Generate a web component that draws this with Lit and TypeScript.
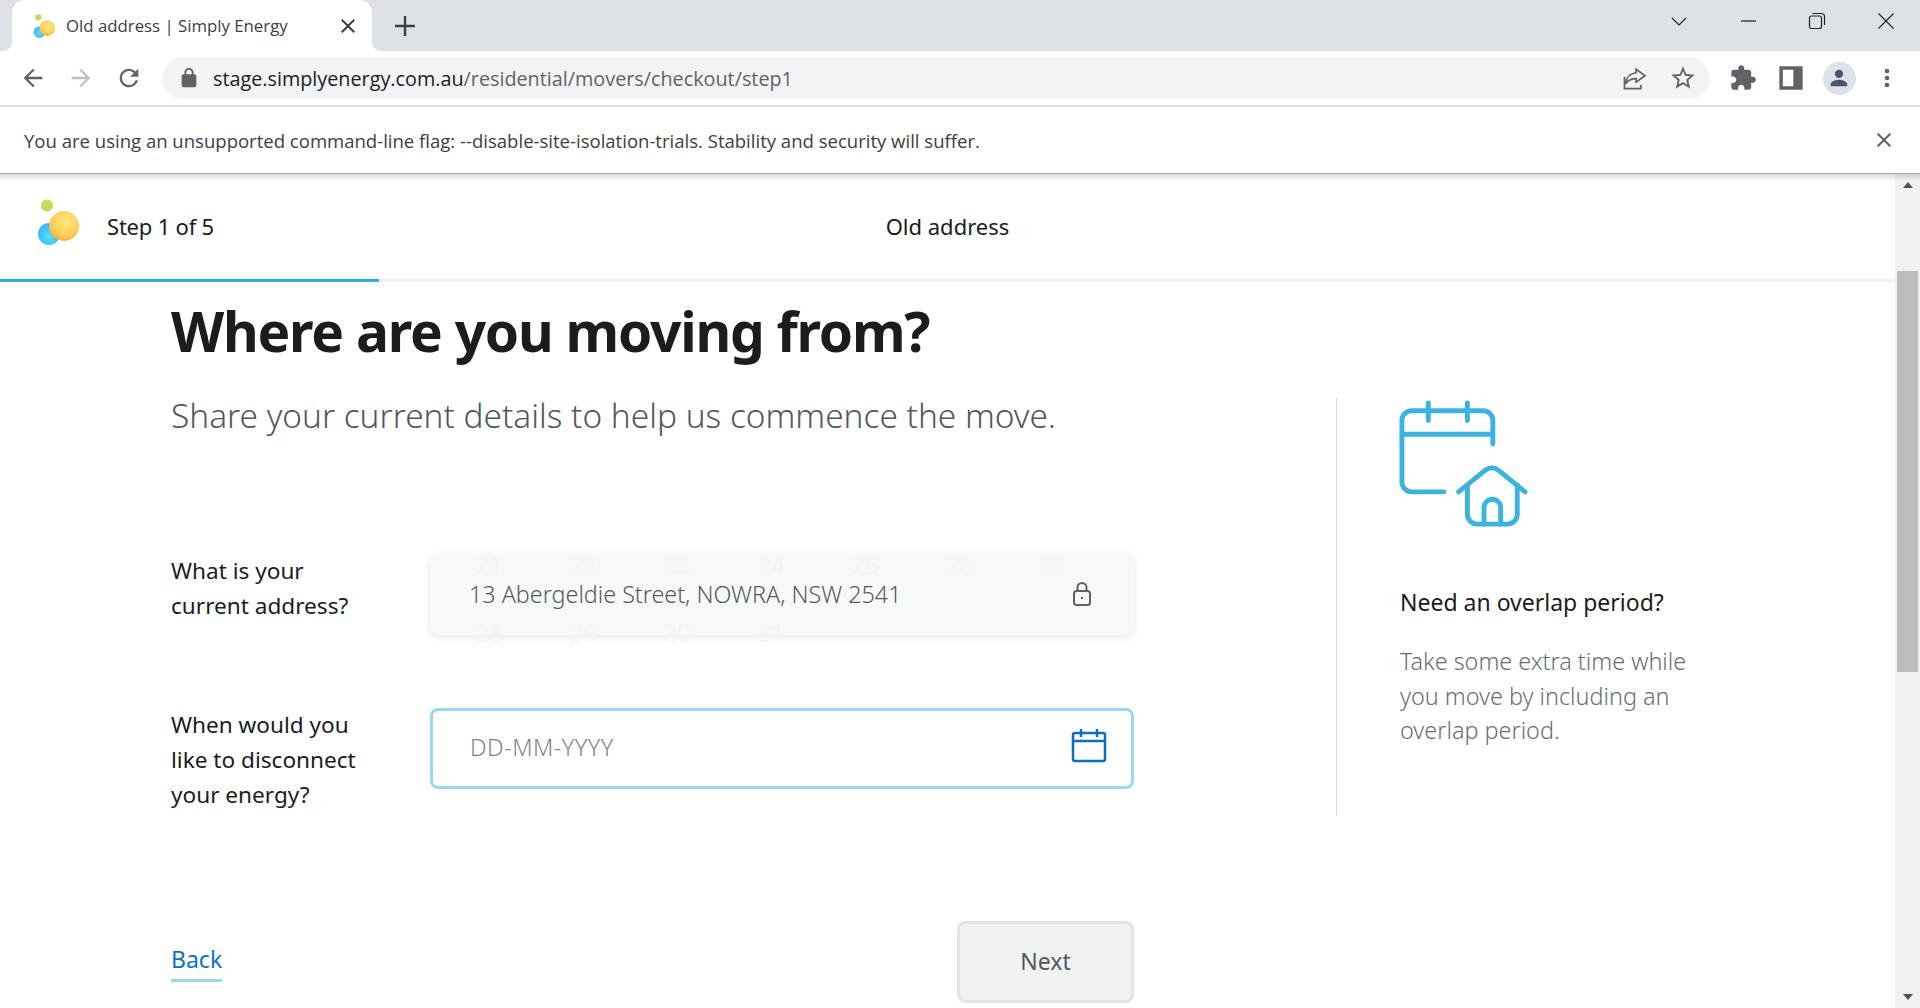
import {css, html, LitElement, svg} from "lit";
import {customElement} from "lit/decorators.js";

const icon = (d: string, cls = "") => html`<svg class=${cls} viewBox="0 0 24 24"><path d=${d}></path></svg>`;

const ARROW = "M20 11H7.83l5.59-5.59L12 4l-8 8 8 8 1.41-1.41L7.83 13H20v-2z";
const RELOAD = "M17.65 6.35A7.958 7.958 0 0 0 12 4c-4.42 0-7.99 3.58-7.99 8s3.57 8 7.99 8c3.73 0 6.84-2.55 7.73-6h-2.08A5.99 5.99 0 0 1 12 18c-3.31 0-6-2.69-6-6s2.69-6 6-6c1.66 0 3.14.69 4.22 1.78L13 11h7V4l-2.35 2.35z";
const STAR = "M22 9.24l-7.19-.62L12 2 9.19 8.63 2 9.24l5.46 4.73L5.82 21 12 17.27 18.18 21l-1.63-7.03L22 9.24zM12 15.4l-3.76 2.27 1-4.28-3.32-2.88 4.38-.38L12 6.1l1.71 4.04 4.38.38-3.32 2.88 1 4.28L12 15.4z";
const PUZZLE = "M20.5 11H19V7c0-1.1-.9-2-2-2h-4V3.5C13 2.12 11.88 1 10.5 1S8 2.12 8 3.5V5H4c-1.1 0-1.99.9-1.99 2v3.8H3.5c1.49 0 2.7 1.21 2.7 2.7s-1.21 2.7-2.7 2.7H2V20c0 1.1.9 2 2 2h3.8v-1.5c0-1.49 1.21-2.7 2.7-2.7 1.49 0 2.7 1.21 2.7 2.7V22H17c1.1 0 2-.9 2-2v-4h1.5c1.38 0 2.5-1.12 2.5-2.5S21.88 11 20.5 11z";
const LOCK = "M18 8h-1V6c0-2.76-2.24-5-5-5S7 3.24 7 6v2H6c-1.1 0-2 .9-2 2v10c0 1.1.9 2 2 2h12c1.1 0 2-.9 2-2V10c0-1.1-.9-2-2-2zM9 6c0-1.66 1.34-3 3-3s3 1.34 3 3v2H9V6z";
const CLOSE = "M19 6.41 17.59 5 12 10.59 6.41 5 5 6.41 10.59 12 5 17.59 6.41 19 12 13.41 17.59 19 19 17.59 13.41 12z";

const logo = (size: number) => html`
    <svg class="logo" width=${size} height=${size} viewBox="0 0 46 46">
        <defs>
            <radialGradient id="sun-${size}" cx="0.55" cy="0.35" r="0.7">
                <stop offset="0" stop-color="#ffe67a"></stop>
                <stop offset="0.65" stop-color="#fdd05c"></stop>
                <stop offset="1" stop-color="#f9a63a"></stop>
            </radialGradient>
            <radialGradient id="sea-${size}" cx="0.5" cy="0.6" r="0.7">
                <stop offset="0" stop-color="#5fdcff"></stop>
                <stop offset="1" stop-color="#2ab0f0"></stop>
            </radialGradient>
        </defs>
        <circle cx="12" cy="6.5" r="6" fill="#c3de55"></circle>
        <circle cx="14" cy="35" r="11" fill="url(#sea-${size})"></circle>
        <circle cx="29" cy="27" r="15" fill="url(#sun-${size})"></circle>
    </svg>`;

@customElement("browser-chrome")
class BrowserChrome extends LitElement {
    static styles = css`
        :host {
            display: block;
            font-family: "Open Sans", sans-serif;
            color: #3c4043;
        }

        path {
            fill: #5f6368;
        }

        .strip {
            display: flex;
            align-items: stretch;
            height: 51px;
            background: #dee1e6;
        }

        .tab {
            position: relative;
            display: flex;
            align-items: center;
            box-sizing: border-box;
            width: 360px;
            margin-left: 12px;
            padding: 0 12px 0 20px;
            background: #fff;
            border-radius: 13px 13px 0 0;
            font-size: 16.8px;
        }

        .tab svg {
            flex: none;
        }

        .tab-x {
            width: 24px;
            height: 24px;
        }

        .tab-x path {
            fill: #3c4043;
        }

        .tab::before,
        .tab::after {
            content: "";
            position: absolute;
            bottom: 0;
            width: 10px;
            height: 10px;
        }

        .tab::before {
            left: -10px;
            background: radial-gradient(circle at 0 0, transparent 10px, #fff 10.5px);
        }

        .tab::after {
            right: -10px;
            background: radial-gradient(circle at 100% 0, transparent 10px, #fff 10.5px);
        }

        .tab-title {
            flex: 1;
            margin-left: 10px;
            white-space: nowrap;
        }

        .plus {
            display: flex;
            align-items: center;
            margin-left: 21px;
        }

        .plus path {
            fill: #3c4043;
        }

        .spacer {
            flex: 1;
        }

        .win {
            display: flex;
            align-items: center;
            justify-content: center;
            width: 69px;
            margin-bottom: 9px;
        }

        .win svg {
            fill: none;
            stroke: #202124;
            stroke-width: 1.2;
        }

        .win path {
            fill: none;
        }

        .toolbar {
            display: flex;
            align-items: center;
            height: 54px;
            padding: 0 9px;
            background: #fff;
            border-bottom: 2px solid #dcdcdc;
        }

        .slot {
            display: flex;
            align-items: center;
            justify-content: center;
            flex: none;
            width: 48px;
        }

        .slot svg {
            width: 28px;
            height: 28px;
        }

        .flip {
            transform: scaleX(-1);
        }

        .flip path {
            fill: #bdc1c6;
        }

        .share path {
            fill: none;
            stroke: #5f6368;
            stroke-width: 1.5;
        }

        .omni {
            display: flex;
            align-items: center;
            flex: 1;
            height: 42px;
            margin: 0 9px;
            padding: 0 3px 0 16px;
            background: #f1f3f4;
            border-radius: 21px;
            font-size: 19.8px;
            white-space: nowrap;
        }

        .omni .lock {
            width: 22px;
            height: 22px;
            margin-right: 13px;
        }

        .omni b {
            font-weight: 400;
            color: #202124;
        }

        .omni span {
            flex: 1;
            color: #5f6368;
        }

        .avatar {
            display: flex;
            align-items: center;
            justify-content: center;
            width: 33px;
            height: 33px;
            border-radius: 50%;
            background: #dee1e6;
        }

        .avatar svg {
            width: 22px;
            height: 22px;
        }

        .avatar path {
            fill: #4a5470;
        }

        .infobar {
            display: flex;
            align-items: center;
            justify-content: space-between;
            height: 66px;
            padding: 0 24px;
            background: #fff;
            border-bottom: 1px solid #a9a9a9;
            font-size: 18.55px;
            white-space: nowrap;
        }

        .infobar svg {
            width: 24px;
            height: 24px;
        }
    `;

    render() {
        return html`
            <div class="strip">
                <div class="tab">
                    ${logo(24)}
                    <span class="tab-title">Old address | Simply Energy</span>
                    ${icon(CLOSE, "tab-x")}
                </div>
                <div class="plus">
                    <svg width="24" height="24" viewBox="0 0 24 24"><path d="M22 13.2h-8.8V22h-2.4v-8.8H2v-2.4h8.8V2h2.4v8.8H22z"></path></svg>
                </div>
                <div class="spacer"></div>
                <div class="win"><svg width="18" height="18" viewBox="0 0 18 18"><path d="M2 6l7 7 7-7"></path></svg></div>
                <div class="win"><svg width="18" height="18" viewBox="0 0 18 18"><path d="M2 9h15"></path></svg></div>
                <div class="win"><svg width="18" height="18" viewBox="0 0 18 18"><rect x="1.5" y="4" width="12" height="12.5" rx="2"></rect><path d="M4.5 1.5h9a3 3 0 0 1 3 3v8.5"></path></svg></div>
                <div class="win"><svg width="18" height="18" viewBox="0 0 18 18"><path d="M1.5 1.5l15 15M16.5 1.5l-15 15"></path></svg></div>
            </div>
            <div class="toolbar">
                <div class="slot">${icon(ARROW)}</div>
                <div class="slot">${icon(ARROW, "flip")}</div>
                <div class="slot">${icon(RELOAD)}</div>
                <div class="omni">
                    ${icon(LOCK, "lock")}
                    <b>stage.simplyenergy.com.au</b><span>/residential/movers/checkout/step1</span>
                    <div class="slot">
                        <svg class="share" viewBox="0 0 24 24"><path d="M3 11v10h14v-3M13 4.500l7.500 5.500-7.500 5.500v-3c-4 0-7 1-9 4.500 .5-5.500 4-9 9-9.500z"></path></svg>
                    </div>
                    <div class="slot">${icon(STAR)}</div>
                </div>
                <div class="slot">${icon(PUZZLE)}</div>
                <div class="slot">
                    <svg viewBox="0 0 24 24"><path fill-rule="evenodd" d="M2 2h20v20H2zM5 5v14h9V5z"></path></svg>
                </div>
                <div class="slot">
                    <div class="avatar">
                        <svg viewBox="0 0 24 24"><path d="M12 12a4.500 4.500 0 1 0 0-9 4.500 4.500 0 0 0 0 9zm0 2c-3.600 0-9 1.800-9 5v2h18v-2c0-3.200-5.400-5-9-5z"></path></svg>
                    </div>
                </div>
                <div class="slot">
                    <svg viewBox="0 0 24 24"><path d="M12 8a2 2 0 1 0 0-4 2 2 0 0 0 0 4zm0 2a2 2 0 1 0 0 4 2 2 0 0 0 0-4zm0 6a2 2 0 1 0 0 4 2 2 0 0 0 0-4z"></path></svg>
                </div>
            </div>
            <div class="infobar">
                <span>You are using an unsupported command-line flag: --disable-site-isolation-trials. Stability and security will suffer.</span>
                ${icon(CLOSE)}
            </div>
        `;
    }
}

const overlapIcon = svg`
    <path d="M83 113H50a10 10 0 0 1-10-10V40a10 10 0 0 1 10-10h73a10 10 0 0 1 10 10v24"></path>
    <path d="M40 54h93M67 22v18M107 22v18"></path>
    <path d="M98 113l27-22a11 11 0 0 1 14 0l27 22"></path>
    <path d="M107 106v30a10 10 0 0 0 10 10h31a10 10 0 0 0 10-10v-30"></path>
    <path d="M124 146v-17a8.500 8.500 0 0 1 17 0v17"></path>
`;

@customElement("app-root")
export default class AppRoot extends LitElement {
    static styles = css`
        :host {
            display: flex;
            flex-direction: column;
            height: 1008px;
            overflow: hidden;
            background: #fff;
            font-family: "Noto Sans", sans-serif;
            color: #1a1c1e;
        }

        .viewport {
            position: relative;
            display: flex;
            flex: 1;
            min-height: 0;
        }

        .viewport::before {
            content: "";
            position: absolute;
            left: 0;
            right: 0;
            top: 0;
            height: 7px;
            background: linear-gradient(rgba(0, 0, 0, 0.14), transparent);
        }

        .page {
            flex: 1;
            min-width: 0;
        }

        .topbar {
            position: relative;
            display: grid;
            grid-template-columns: 1fr auto 1fr;
            align-items: center;
            box-sizing: border-box;
            height: 108px;
            padding: 0 0 2px 35px;
            border-bottom: 3px solid #f1f1f1;
            font-size: 22px;
        }

        .topbar::after {
            content: "";
            position: absolute;
            left: 0;
            bottom: -3px;
            width: 379px;
            height: 3px;
            background: #2eaedb;
        }

        .brand {
            display: flex;
            align-items: center;
            gap: 26px;
            letter-spacing: -0.2px;
        }

        .brand svg {
            margin-top: -7px;
        }

        .step-name {
            margin-left: -35px;
        }

        .content {
            padding: 13px 0 0 171px;
        }

        h1 {
            margin: 0;
            font-size: 55px;
            line-height: 72px;
            font-weight: 700;
            letter-spacing: -1.23px;
        }

        .columns {
            display: flex;
            margin-top: 26px;
        }

        .main {
            width: 963px;
        }

        .sub {
            margin: 0;
            font-size: 33.4px;
            line-height: 45px;
            padding-bottom: 1px;
            font-weight: 300;
            color: #53585c;
        }

        .form {
            display: grid;
            grid-template-columns: 259px 704px;
            row-gap: 72px;
            margin-top: 114px;
            font-size: 22.6px;
            line-height: 34.800px;
        }

        .label {
            padding-top: 1px;
        }

        .field {
            position: relative;
            display: flex;
            align-items: center;
            justify-content: space-between;
            box-sizing: border-box;
            height: 82px;
            padding: 0 41px 0 39px;
            border-radius: 8px;
            font-size: 23.3px;
            line-height: 26px;
            font-weight: 300;
        }

        .locked {
            background: #f7f9f9;
            box-shadow: 0 2px 8px rgba(0, 0, 0, 0.09);
            color: #555a5e;
        }

        .date {
            height: 81px;
            margin-top: 1px;
            padding: 0 24px 4px 37px;
            border: 3px solid #98d8f2;
            color: #808386;
            letter-spacing: 0.5px;
        }

        .date svg {
            margin-bottom: 1px;
            top: -1px;
        }

        .ghost {
            position: absolute;
            left: 12px;
            display: flex;
            line-height: 20px;
            color: #f2f4f5;
        }

        .ghost.a {
            top: 2px;
        }

        .ghost.b {
            top: 70px;
        }

        .ghost span {
            width: 94px;
            text-align: center;
        }

        .field span.value {
            position: relative;
        }

        .field svg {
            position: relative;
            flex: none;
            fill: none;
        }

        .actions {
            display: flex;
            align-items: center;
            justify-content: space-between;
            margin-top: 109px;
            font-size: 23px;
        }

        .back {
            padding-bottom: 3px;
            border-bottom: 3px solid #98d8f2;
            line-height: 34px;
            color: #0b73c4;
        }

        .next {
            display: flex;
            align-items: center;
            justify-content: center;
            box-sizing: border-box;
            width: 177px;
            height: 82px;
            padding-bottom: 3px;
            background: #f1f3f2;
            border: 3px solid #e4e4e4;
            border-radius: 8px;
            color: #53585c;
        }

        .aside {
            box-sizing: border-box;
            height: 418px;
            margin: 5px 0 0 202px;
            padding-left: 63px;
            border-left: 1px solid #d4d6d8;
        }

        .aside svg {
            display: block;
            margin: 1px 0 0 -2px;
            fill: none;
            stroke: #3bb3e0;
            stroke-width: 5;
            stroke-linecap: round;
            stroke-linejoin: round;
        }

        .aside h2 {
            margin: 56px 0 0;
            font-size: 23px;
            line-height: 35px;
            font-weight: 400;
            white-space: nowrap;
        }

        .aside p {
            width: 320px;
            margin: 24px 0 0;
            font-size: 23.4px;
            line-height: 34.500px;
            font-weight: 300;
            color: #6a6e72;
        }

        .scrollbar {
            display: flex;
            flex-direction: column;
            align-items: center;
            flex: none;
            width: 25px;
            background: #f1f1f1;
        }

        .arrow {
            width: 0;
            height: 0;
            margin-top: 8px;
            border-left: 5.500px solid transparent;
            border-right: 5.500px solid transparent;
            border-bottom: 6px solid #505050;
        }

        .thumb {
            width: 21px;
            height: 401px;
            margin-top: 83px;
            background: #bdbdbd;
        }

        .arrow.down {
            margin-top: auto;
            margin-bottom: 8px;
            border-bottom: 0;
            border-top: 6px solid #505050;
        }
    `;

    render() {
        return html`
            <browser-chrome></browser-chrome>
            <div class="viewport">
                <div class="page">
                    <div class="topbar">
                        <div class="brand">${logo(46)}<span>Step 1 of 5</span></div>
                        <div class="step-name">Old address</div>
                    </div>
                    <div class="content">
                        <h1>Where are you moving from?</h1>
                        <div class="columns">
                            <div class="main">
                                <p class="sub">Share your current details to help us commence the move.</p>
                                <div class="form">
                                    <div class="label">What is your<br>current address?</div>
                                    <div class="field locked">
                                        <div class="ghost a">${[21, 22, 23, 24, 25, 26, 27].map(n => html`<span>${n}</span>`)}</div>
                                        <div class="ghost b">${[28, 29, 30, 31].map(n => html`<span>${n}</span>`)}</div>
                                        <span class="value">13 Abergeldie Street, NOWRA, NSW 2541</span>
                                        <svg width="22" height="26" viewBox="0 0 22 26" stroke="#5f6265" stroke-width="2">
                                            <rect x="3" y="10" width="16" height="14" rx="2.500"></rect>
                                            <path d="M6.500 10V6.500a4.500 4.500 0 0 1 9 0V10M11 16v2"></path>
                                        </svg>
                                    </div>
                                    <div class="label">When would you<br>like to disconnect<br>your energy?</div>
                                    <div class="field date">
                                        <span class="value">DD-MM-YYYY</span>
                                        <svg width="36" height="36" viewBox="0 0 36 36" stroke="#0a6fbd" stroke-width="2.500">
                                            <rect x="2" y="6" width="32" height="28" rx="2"></rect>
                                            <path d="M2 14h32M10 2v8M26 2v8"></path>
                                        </svg>
                                    </div>
                                </div>
                                <div class="actions">
                                    <div class="back">Back</div>
                                    <div class="next">Next</div>
                                </div>
                            </div>
                            <div class="aside">
                                <svg width="131" height="130" viewBox="36 18 134 133">${overlapIcon}</svg>
                                <h2>Need an overlap period?</h2>
                                <p>Take some extra time while you move by including an overlap period.</p>
                            </div>
                        </div>
                    </div>
                </div>
                <div class="scrollbar">
                    <div class="arrow"></div>
                    <div class="thumb"></div>
                    <div class="arrow down"></div>
                </div>
            </div>
        `;
    }
}
